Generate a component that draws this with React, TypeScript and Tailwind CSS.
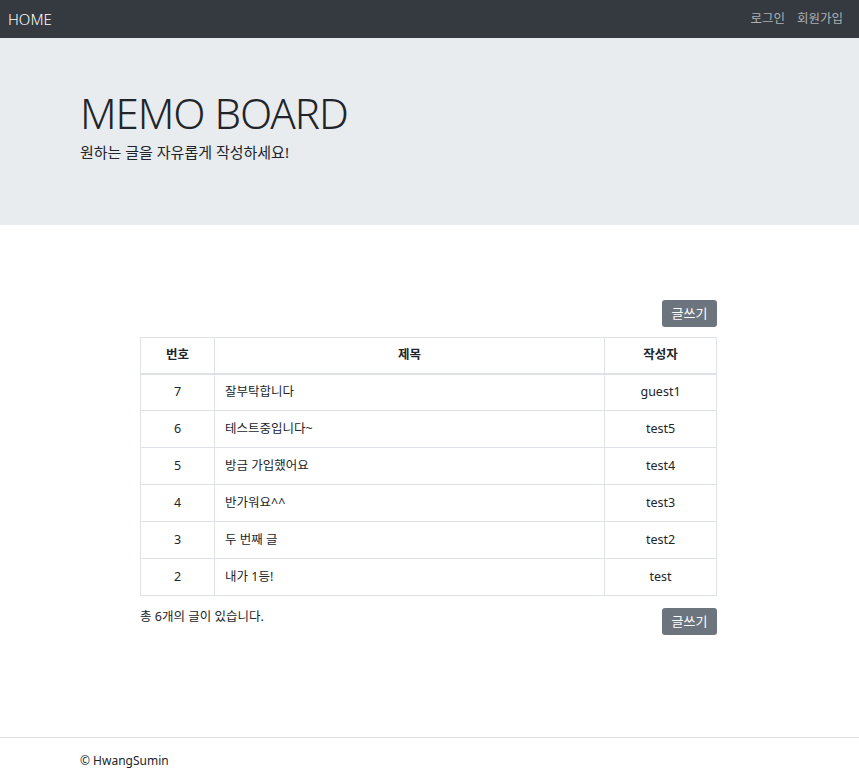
const memos = [
  { id: 7, title: "잘부탁합니다", writer: "guest1" },
  { id: 6, title: "테스트중입니다~", writer: "test5" },
  { id: 5, title: "방금 가입했어요", writer: "test4" },
  { id: 4, title: "반가워요^^", writer: "test3" },
  { id: 3, title: "두 번째 글", writer: "test2" },
  { id: 2, title: "내가 1등!", writer: "test" },
];

function WriteButton() {
  return (
    <button className="h-[27px] w-[55px] rounded-[3px] bg-[#6c757d] text-[13px] text-white">
      글쓰기
    </button>
  );
}

export default function App() {
  return (
    <div className="min-h-[777px] bg-white font-['Noto_Sans','Noto_Sans_CJK_KR',sans-serif] text-[#212529]">
      <nav className="flex h-[38px] items-center justify-between bg-[#343a40] pl-2 pr-4">
        <a className="text-[15px] font-light text-white">HOME</a>
        <div className="flex gap-3 text-[12.5px] text-white/60">
          <a>로그인</a>
          <a>회원가입</a>
        </div>
      </nav>

      <header className="h-[187px] bg-[#e9ecef] pl-[80px] pt-[50px]">
        <h1 className="text-[42px] font-light leading-[1.2] tracking-tight">MEMO BOARD</h1>
        <p className="mt-[3px] text-[15px] leading-[22px]">원하는 글을 자유롭게 작성하세요!</p>
      </header>

      <main className="ml-[140px] w-[577px] pt-[75px] pb-[102px]">
        <div className="flex justify-end">
          <WriteButton />
        </div>
        <table className="mt-[10px] w-full border-collapse text-[12.5px]">
          <thead>
            <tr className="h-[36px] border-b-2 border-[#dee2e6]">
              <th className="w-[74px] border border-[#dee2e6] font-bold">번호</th>
              <th className="border border-[#dee2e6] font-bold">제목</th>
              <th className="w-[112px] border border-[#dee2e6] font-bold">작성자</th>
            </tr>
          </thead>
          <tbody>
            {memos.map((m) => (
              <tr key={m.id} className="h-[37px]">
                <td className="border border-[#dee2e6] text-center">{m.id}</td>
                <td className="border border-[#dee2e6] px-[10px]">{m.title}</td>
                <td className="border border-[#dee2e6] text-center">{m.writer}</td>
              </tr>
            ))}
          </tbody>
        </table>
        <div className="mt-[12px] flex items-start justify-between">
          <p className="text-[12.5px]">총 6개의 글이 있습니다.</p>
          <WriteButton />
        </div>
      </main>

      <footer className="border-t border-[#dee2e6] pl-[80px] pt-[14px] text-[12px]">
        © HwangSumin
      </footer>
    </div>
  );
}
